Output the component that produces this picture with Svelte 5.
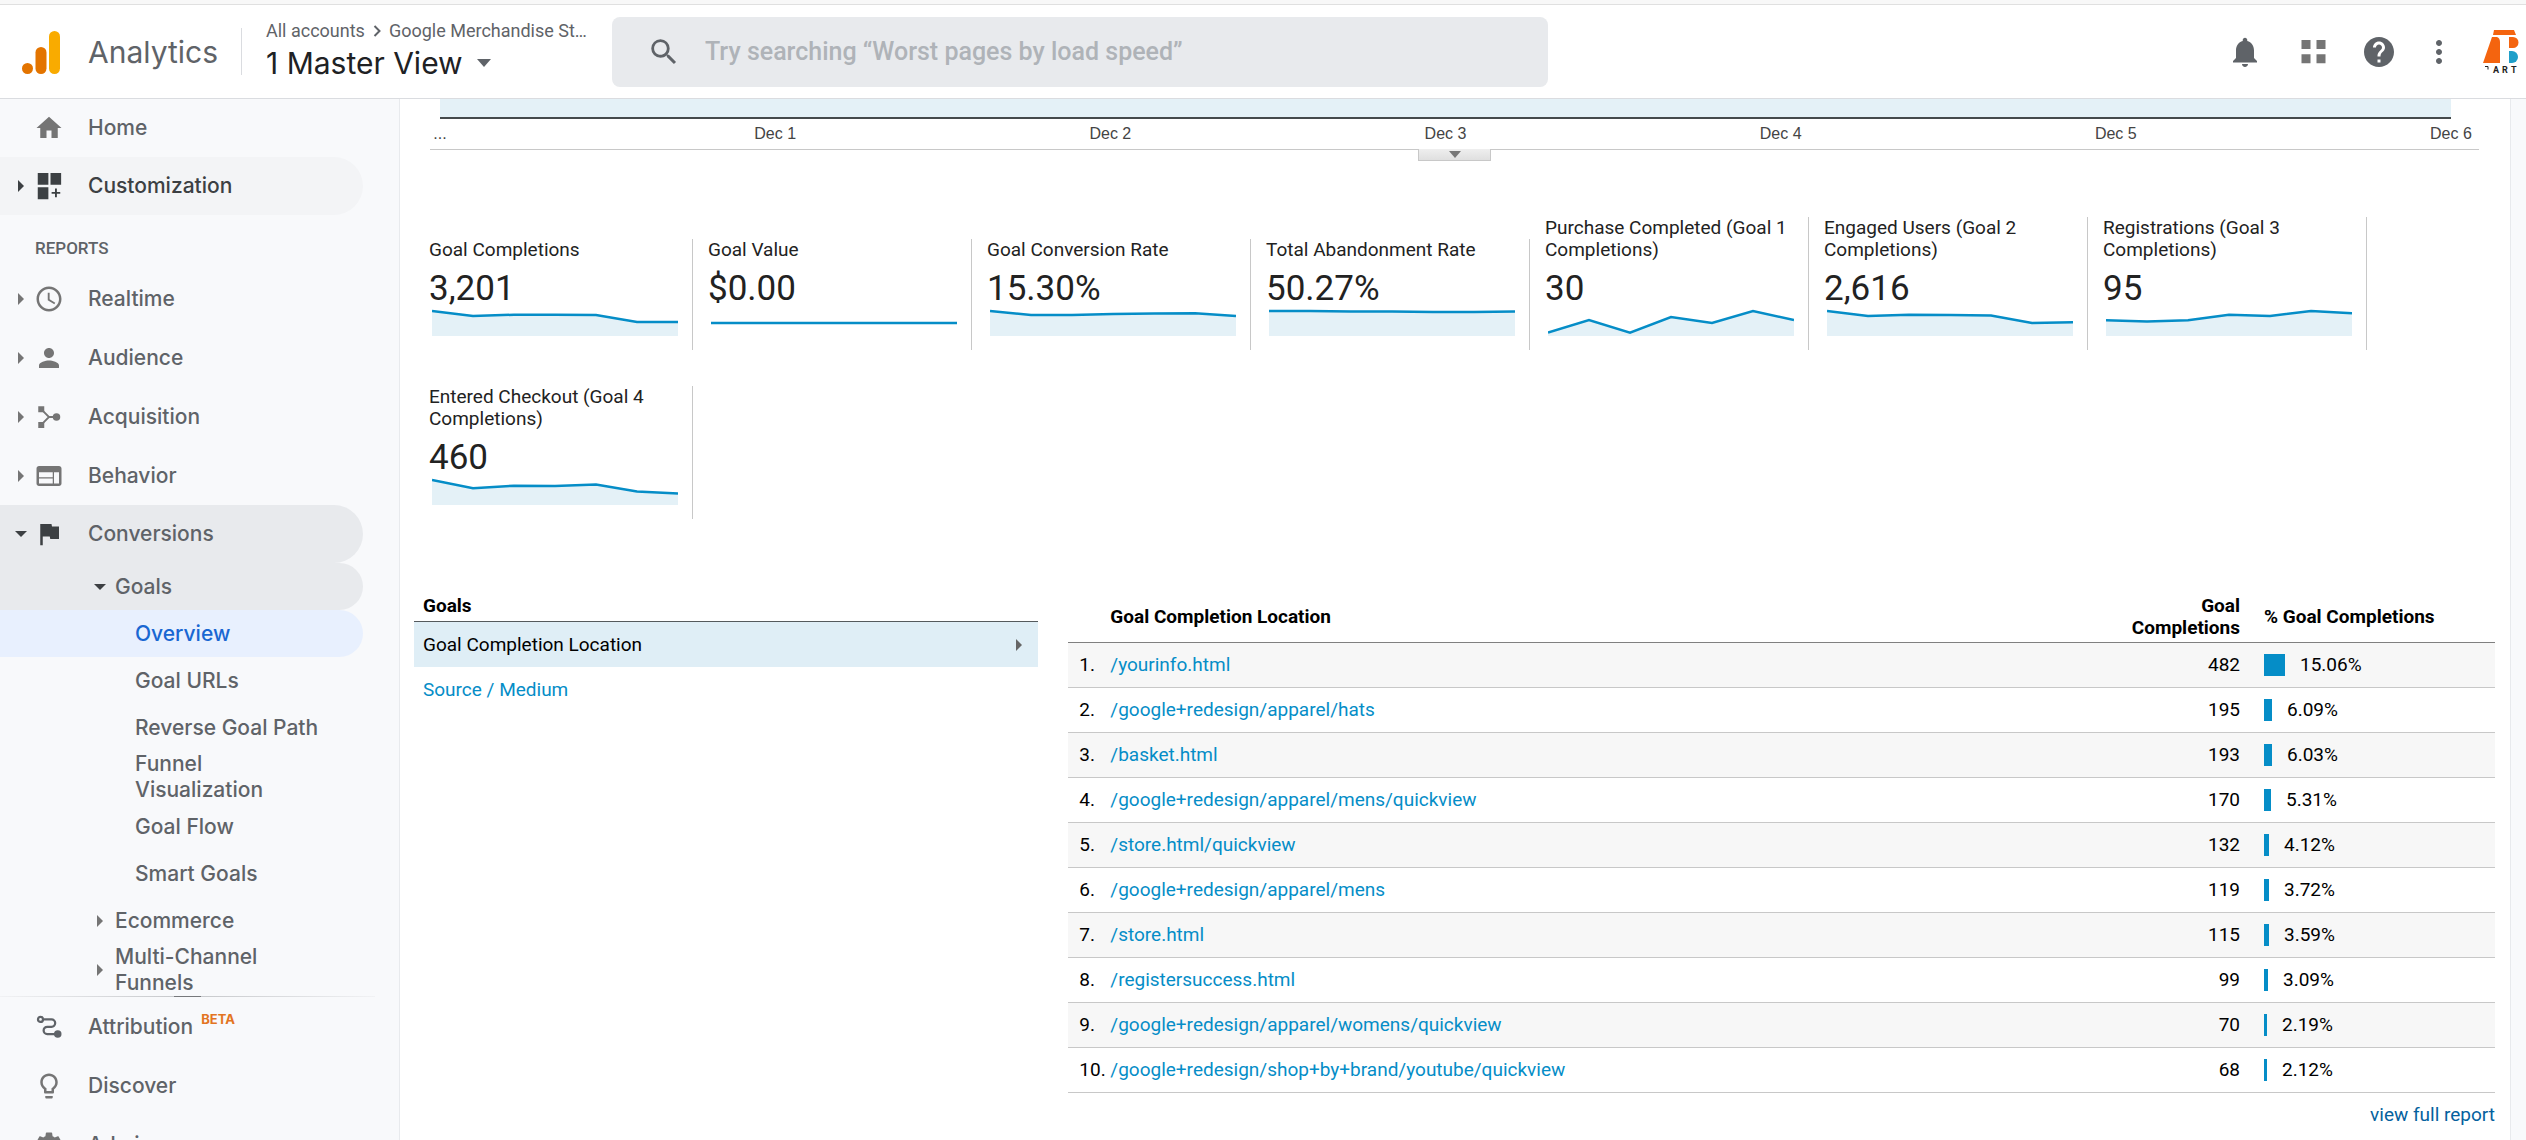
<script>
  const icons = {
    home: 'M10 20v-6h4v6h5v-8h3L12 3 2 12h3v8z',
    realtime: 'M11.99 2C6.47 2 2 6.48 2 12s4.47 10 9.99 10C17.52 22 22 17.52 22 12S17.52 2 11.99 2zM12 20c-4.42 0-8-3.58-8-8s3.58-8 8-8 8 3.58 8 8-3.58 8-8 8zM12.5 7H11v6l5.25 3.15.75-1.23-4.5-2.67z',
    audience: 'M12 12c2.21 0 4-1.79 4-4s-1.79-4-4-4-4 1.79-4 4 1.79 4 4 4zm0 2c-2.67 0-8 1.34-8 4v2h16v-2c0-2.66-5.33-4-8-4z',
    behavior: 'M20 4H4c-1.1 0-1.99.9-1.99 2L2 18c0 1.1.9 2 2 2h16c1.1 0 2-.9 2-2V6c0-1.1-.9-2-2-2zm-5 14H4v-4h11v4zm0-5H4V9h11v4zm5 5h-4V9h4v9z',
    conversions: 'M14.4 6L14 4H5v17h2v-7h5.6l.4 2h7V6z',
    discover: 'M9 21c0 .55.45 1 1 1h4c.55 0 1-.45 1-1v-1H9v1zm3-19C8.14 2 5 5.14 5 9c0 2.38 1.19 4.47 3 5.74V17c0 .55.45 1 1 1h6c.55 0 1-.45 1-1v-2.26c1.81-1.27 3-3.36 3-5.74 0-3.86-3.14-7-7-7zm2.85 11.1l-.85.6V16h-4v-2.3l-.85-.6C7.8 12.16 7 10.63 7 9c0-2.76 2.24-5 5-5s5 2.24 5 5c0 1.63-.8 3.16-2.15 4.1z',
    admin: 'M19.43 12.98c.04-.32.07-.64.07-.98s-.03-.66-.07-.98l2.11-1.65c.19-.15.24-.42.12-.64l-2-3.46c-.12-.22-.39-.3-.61-.22l-2.49 1c-.52-.4-1.08-.73-1.69-.98l-.38-2.65C14.46 2.18 14.25 2 14 2h-4c-.25 0-.46.18-.49.42l-.38 2.65c-.61.25-1.17.59-1.69.98l-2.49-1c-.23-.09-.49 0-.61.22l-2 3.46c-.13.22-.07.49.12.64l2.11 1.65c-.04.32-.07.65-.07.98s.03.66.07.98l-2.11 1.65c-.19.15-.24.42-.12.64l2 3.46c.12.22.39.3.61.22l2.49-1c.52.4 1.08.73 1.69.98l.38 2.65c.03.24.24.42.49.42h4c.25 0 .46-.18.49-.42l.38-2.65c.61-.25 1.17-.59 1.69-.98l2.49 1c.23.09.49 0 .61-.22l2-3.46c.12-.22.07-.49-.12-.64l-2.11-1.65zM12 15.5c-1.93 0-3.5-1.57-3.5-3.5s1.57-3.5 3.5-3.5 3.5 1.57 3.5 3.5-1.57 3.5-3.5 3.5z'
  };

  const sections = [
    { label: 'Realtime', icon: 'realtime' },
    { label: 'Audience', icon: 'audience' },
    { label: 'Acquisition', icon: 'acquisition' },
    { label: 'Behavior', icon: 'behavior' },
    { label: 'Conversions', icon: 'conversions', open: true }
  ];
  const goalPages = ['Overview', 'Goal URLs', 'Reverse Goal Path', 'Funnel Visualization', 'Goal Flow', 'Smart Goals'];
  const footerLinks = [
    { label: 'Attribution', icon: 'attribution', beta: true },
    { label: 'Discover', icon: 'discover' },
    { label: 'Admin', icon: 'admin' }
  ];

  const days = ['...', 'Dec 1', 'Dec 2', 'Dec 3', 'Dec 4', 'Dec 5', 'Dec 6'];

  // Each trend holds seven daily heights, measured down from the top of the sparkline.
  const metrics = [
    { label: 'Goal Completions', value: '3,201', trend: [3, 8, 6.7, 6.7, 7, 14, 14] },
    { label: 'Goal Value', value: '$0.00', trend: [15, 15, 15, 15, 15, 15, 15], flat: true },
    { label: 'Goal Conversion Rate', value: '15.30%', trend: [3, 7, 7, 6, 5.5, 5.3, 8] },
    { label: 'Total Abandonment Rate', value: '50.27%', trend: [3, 3, 3.4, 3.4, 4, 4, 3.4] },
    { label: 'Purchase Completed (Goal 1 Completions)', value: '30', trend: [24.6, 12, 24.6, 9, 15, 3, 12] },
    { label: 'Engaged Users (Goal 2 Completions)', value: '2,616', trend: [3, 8, 6.7, 7, 7.6, 15, 14.3] },
    { label: 'Registrations (Goal 3 Completions)', value: '95', trend: [12.3, 13.6, 12.3, 6.7, 8, 3, 5.3] },
    { label: 'Entered Checkout (Goal 4 Completions)', value: '460', trend: [3, 11.3, 8.7, 9, 7.4, 14.6, 16.4] }
  ];

  const rows = [
    ['/yourinfo.html', 482, 15.06],
    ['/google+redesign/apparel/hats', 195, 6.09],
    ['/basket.html', 193, 6.03],
    ['/google+redesign/apparel/mens/quickview', 170, 5.31],
    ['/store.html/quickview', 132, 4.12],
    ['/google+redesign/apparel/mens', 119, 3.72],
    ['/store.html', 115, 3.59],
    ['/registersuccess.html', 99, 3.09],
    ['/google+redesign/apparel/womens/quickview', 70, 2.19],
    ['/google+redesign/shop+by+brand/youtube/quickview', 68, 2.12]
  ];

  const linePoints = (trend) => trend.map((y, i) => `${i * 41},${y}`).join(' ');
  const barWidth = (pct) => Math.floor(pct * 1.42);
</script>

{#snippet caret(open)}
  <svg class="caret" class:open viewBox="0 0 12 12" aria-hidden="true"><path d="M3 0l6 6-6 6z" /></svg>
{/snippet}

{#snippet navIcon(name)}
  <svg class="nav-icon" viewBox="0 0 24 24" aria-hidden="true">
    {#if name === 'acquisition'}
      <path d="M3.4 3.4h4.8v4.8H3.4zM3.4 16h4.8v4.8H3.4z" />
      <circle cx="18" cy="12" r="3" />
      <path class="stroke" d="M6.5 6.5L12 12l-5.5 5.5M12 12h5" />
    {:else if name === 'attribution'}
      <circle class="stroke" cx="5.2" cy="5.9" r="2" />
      <path class="stroke" d="M7.4 5.9H14a2.95 2.95 0 0 1 0 5.9h-3.4a2.9 2.9 0 0 0 0 5.8H18" />
      <circle cx="19" cy="17.6" r="3" />
    {:else if name === 'custom'}
      <path d="M3 1.5h8.5V11H3zM13.2 1.5h8.5V11h-8.5zM3 13h8.5v9.500H3zM16.8 14h1.5v2.7H21v1.5h-2.7v2.7h-1.5v-2.7h-2.7v-1.5h2.7z" />
    {:else}
      <path d={icons[name]} />
    {/if}
  </svg>
{/snippet}

<div class="app">
  <header>
    <a class="brand" href="#home">
      <svg class="logo" viewBox="0 0 38 44" aria-hidden="true">
        <rect x="27" y="1" width="11" height="43" rx="5.5" fill="#f9ab00" />
        <rect x="13.5" y="17" width="11" height="27" rx="5.5" fill="#e37400" />
        <circle cx="5.5" cy="38.5" r="5.5" fill="#e37400" />
      </svg>
      <span>Analytics</span>
    </a>
    <button class="account">
      <span class="crumbs">
        All accounts
        <svg class="chevron" viewBox="0 0 8 12" aria-hidden="true"><path d="M1.5 1l5 5-5 5" /></svg>
        Google Merchandise St…
      </span>
      <span class="view">1 Master View <svg class="down" viewBox="0 0 14 8" aria-hidden="true"><path d="M0 0h14L7 8z" /></svg></span>
    </button>
    <label class="search">
      <svg viewBox="0 0 24 24" aria-hidden="true"><path d="M15.5 14h-.79l-.28-.27A6.471 6.471 0 0 0 16 9.5 6.5 6.5 0 1 0 9.5 16c1.61 0 3.09-.59 4.23-1.57l.27.28v.79l5 4.99L20.49 19l-4.99-5zm-6 0C7.01 14 5 11.99 5 9.5S7.01 5 9.5 5 14 7.01 14 9.5 11.99 14 9.5 14z" /></svg>
      <input type="search" aria-label="Search" placeholder="Try searching “Worst pages by load speed”" />
    </label>
    <div class="actions">
      <button aria-label="Notifications">
        <svg viewBox="0 0 24 24"><path d="M12 22c1.1 0 2-.9 2-2h-4c0 1.1.89 2 2 2zm6-6v-5c0-3.07-1.64-5.64-4.5-6.32V4c0-.83-.67-1.5-1.5-1.5s-1.5.67-1.5 1.5v.68C7.63 5.36 6 7.92 6 11v5l-2 2v1h16v-1l-2-2z" /></svg>
      </button>
      <button aria-label="Apps">
        <svg class="grid" viewBox="0 0 24 24"><path d="M5 4h6v6H5zM15 4h6v6h-6zM5 13.5h6v6H5zM15 13.5h6v6h-6z" /></svg>
      </button>
      <button aria-label="Help">
        <svg viewBox="0 0 24 24"><path d="M12 2C6.48 2 2 6.48 2 12s4.48 10 10 10 10-4.48 10-10S17.52 2 12 2zm1 17h-2v-2h2v2zm2.07-7.75l-.9.92C13.45 12.9 13 13.5 13 15h-2v-.5c0-1.1.45-2.1 1.17-2.83l1.24-1.26c.37-.36.59-.86.59-1.41 0-1.1-.9-2-2-2s-2 .9-2 2H8c0-2.21 1.79-4 4-4s4 1.79 4 4c0 .88-.36 1.68-.93 2.25z" /></svg>
      </button>
      <button class="narrow" aria-label="More">
        <svg viewBox="0 0 24 24"><path d="M12 8c1.1 0 2-.9 2-2s-.9-2-2-2-2 .9-2 2 .9 2 2 2zm0 2c-1.1 0-2 .9-2 2s.9 2 2 2 2-.9 2-2-.9-2-2-2zm0 6c-1.1 0-2 .9-2 2s.9 2 2 2 2-.9 2-2-.9-2-2-2z" /></svg>
      </button>
      <button class="avatar" aria-label="Account">
        <svg viewBox="0 0 36 44">
          <path d="M11 0h20l2 5H10z" fill="#f4640f" />
          <path d="M9 7h5q3 1 3 5v21H0z" fill="#f4640f" />
          <path d="M26 7h4a5.5 5.5 0 0 1 0 11h-4z" fill="#f4640f" />
          <path d="M26 21h3a6 6 0 0 1 0 12h-3z" fill="#1f9fc9" />
          <path d="M2 36.5h3v3" class="letter-edge" />
          <text x="10" y="43">A</text>
          <text x="19" y="43">R</text>
          <text x="28" y="43">T</text>
        </svg>
      </button>
    </div>
  </header>

  <div class="body">
    <nav>
      <a class="item short" href="#home"><span class="gutter"></span>{@render navIcon('home')}<span>Home</span></a>
      <a class="item short hover" href="#customization"><span class="gutter">{@render caret(false)}</span>{@render navIcon('custom')}<span>Customization</span></a>
      <h2>REPORTS</h2>
      {#each sections as s}
        <a class="item" class:active={s.open} class:short={s.open} href="#{s.icon}">
          <span class="gutter">{@render caret(s.open)}</span>{@render navIcon(s.icon)}<span>{s.label}</span>
        </a>
      {/each}
      <a class="group active" href="#goals">{@render caret(true)}<span>Goals</span></a>
      {#each goalPages as page, i}
        <a class="leaf" class:selected={i === 0} href="#goals-{i}"><span>{page}</span></a>
      {/each}
      <a class="group" href="#ecommerce">{@render caret(false)}<span>Ecommerce</span></a>
      <a class="group" href="#multi-channel">{@render caret(false)}<span>Multi-Channel Funnels</span></a>
      <div class="divider"><span></span></div>
      {#each footerLinks as f}
        <a class="item" class:dark={f.beta} href="#{f.icon}">
          <span class="gutter"></span>{@render navIcon(f.icon)}<span>{f.label}{#if f.beta}<sup>BETA</sup>{/if}</span>
        </a>
      {/each}
    </nav>

    <main>
      <section class="timeline">
        <div class="area"></div>
        <div class="days">
          {#each days as d}<span class="day">{d}</span>{/each}
        </div>
        <button class="handle" aria-label="Toggle chart"><svg viewBox="0 0 12 7"><path d="M0 0h12L6 7z" /></svg></button>
      </section>

      <section class="metrics">
        {#each metrics as m}
          <article>
            <h3>{m.label}</h3>
            <strong>{m.value}</strong>
            <svg viewBox="0 0 246 30" aria-hidden="true">
              {#if !m.flat}<polygon points="0,28 {linePoints(m.trend)} 246,28" />{/if}
              <polyline points={linePoints(m.trend)} />
            </svg>
          </article>
        {/each}
      </section>

      <section class="report">
        <div class="dimensions">
          <h3>Goals</h3>
          <a class="current" href="#location">Goal Completion Location <svg viewBox="0 0 6 12" aria-hidden="true"><path d="M0 0l6 6-6 6z" /></svg></a>
          <a href="#source">Source / Medium</a>
        </div>
        <div class="locations">
          <table>
            <thead>
              <tr>
                <th class="index"></th>
                <th class="path">Goal Completion Location</th>
                <th class="count">Goal Completions</th>
                <th class="share">% Goal Completions</th>
              </tr>
            </thead>
            <tbody>
              {#each rows as [path, count, pct], i}
                <tr>
                  <td class="index">{i + 1}.</td>
                  <td class="path"><a href="#row-{i}">{path}</a></td>
                  <td class="count">{count}</td>
                  <td class="share"><div><span class="bar" style:width="{barWidth(pct)}px"></span>{pct.toFixed(2)}%</div></td>
                </tr>
              {/each}
            </tbody>
          </table>
          <a class="full" href="#full">view full report</a>
        </div>
      </section>
    </main>
  </div>
</div>

<style>
  :global(body) {
    font-family: Roboto, 'Liberation Sans', sans-serif;
    font-size: 19px;
    line-height: 22px;
    color: #000;
  }
  .app {
    display: flex;
    flex-direction: column;
    height: 100vh;
    overflow: hidden;
    box-sizing: border-box;
    border-top: 4px solid #f8f8f8;
    background: #f8f9fb;
  }
  a { text-decoration: none; color: #058dc7; }
  button { border: 0; padding: 0; background: none; font: inherit; cursor: pointer; }
  h2, h3 { margin: 0; }

  header {
    display: flex;
    align-items: center;
    flex: none;
    height: 93px;
    padding: 0 7px 0 22px;
    border-top: 1px solid #e0e0e0;
    border-bottom: 1px solid #dadce0;
    background: #fff;
    color: #5f6368;
  }
  .brand {
    display: flex;
    align-items: center;
    gap: 28px;
    width: 219px;
    height: 47px;
    border-right: 1px solid #dadce0;
    font: 30px/44px Inter, sans-serif;
    color: #5f6368;
  }
  .logo { width: 38px; height: 44px; }
  .account {
    display: flex;
    flex-direction: column;
    width: 346px;
    padding: 0 0 3px 24px;
    box-sizing: border-box;
    text-align: left;
    color: #5f6368;
    white-space: nowrap;
  }
  .crumbs { display: flex; align-items: center; gap: 8px; font-size: 18px; line-height: 26px; }
  .chevron { width: 8px; height: 12px; fill: none; stroke: #5f6368; stroke-width: 2; }
  .view { display: flex; align-items: center; gap: 14px; font: 30px/38px Inter, sans-serif; color: #202124; }
  .down { width: 14px; height: 8px; fill: #5f6368; }
  .search {
    display: flex;
    align-items: center;
    gap: 24px;
    flex: 0 1 936px;
    height: 70px;
    padding: 0 35px;
    margin-left: 24px;
    box-sizing: border-box;
    border-radius: 8px;
    background: #e8eaed;
  }
  .search svg { flex: none; width: 34px; height: 34px; fill: #5f6368; }
  .search input { flex: 1; min-width: 0; border: 0; padding: 0; outline: 0; background: none; font: 500 25px/32px Roboto, sans-serif; color: #5f6368; }
  .search input::placeholder { color: #afb3b8; opacity: 1; }
  .actions { display: flex; align-items: center; gap: 31px; margin-left: auto; }
  .actions button { display: flex; justify-content: center; width: 36px; }
  .actions svg { flex: none; width: 36px; height: 36px; fill: #5f6368; }
  .actions .grid { fill: #757575; }
  .actions .narrow { width: 22px; }
  .actions .avatar { width: 38px; justify-content: flex-end; }
  .actions .avatar svg { width: 36px; height: 44px; }
  .avatar text { font: 700 9px Roboto, sans-serif; fill: #222; }
  .letter-edge { fill: none; stroke: #222; }

  .body { display: flex; flex: 1; min-height: 0; padding-right: 15px; }
  nav {
    flex: none;
    width: 399px;
    border-right: 1px solid #e8eaed;
    overflow: hidden;
    font: 500 21px/26px Inter, sans-serif;
  }
  nav a { display: flex; align-items: center; width: 363px; box-sizing: border-box; color: #5f6368; fill: #757575; }
  .item { height: 59px; border-radius: 0 30px 30px 0; }
  .short { height: 58px; }
  .gutter { display: flex; justify-content: center; width: 20px; padding: 0 3px 0 11px; }
  .nav-icon { width: 30px; height: 30px; margin-right: 24px; }
  .stroke { fill: none; stroke: #757575; stroke-width: 1.5; }
  .dark { fill: #5f6368; }
  .dark .stroke { stroke: #5f6368; stroke-width: 1.8; }
  .caret { flex: none; width: 12px; height: 12px; }
  .caret.open { transform: rotate(90deg); }
  .hover { background: #f3f4f6; }
  nav .hover { color: #3c4043; fill: #3c4043; }
  .active { background: #e8eaed; }
  nav .active { fill: #3c4043; }
  nav h2 { height: 54px; padding: 20px 0 0 35px; box-sizing: border-box; font: 500 17px/26px Roboto, sans-serif; color: #5f6368; }
  .group { min-height: 47px; padding-left: 94px; gap: 9px; border-radius: 0 24px 24px 0; }
  .group span, .leaf span { max-width: 184px; }
  .leaf { min-height: 47px; padding-left: 135px; border-radius: 0 24px 24px 0; }
  nav .selected { background: #e8f0fe; color: #1967d2; }
  .divider {
    display: flex;
    justify-content: center;
    width: 375px;
    height: 1px;
    background: linear-gradient(90deg, #f1f2f4, #c4c6c9 50%, #f1f2f4);
  }
  .divider span { width: 27px; background: #77797c; }
  sup { margin-left: 8px; font: 700 13px/13px Inter, sans-serif; color: #e37422; vertical-align: 10px; }

  main { flex: 1; min-width: 0; padding: 0 15px 0 14px; border-right: 1px solid #e8eaed; background: #fff; overflow: hidden; }
  .timeline { display: flex; flex-direction: column; align-items: center; padding: 0 16px; }
  .area { align-self: stretch; height: 18px; margin: 0 28px 0 10px; border-bottom: 2px solid #444a4c; background: #e4f1f7; }
  .days { display: flex; align-self: stretch; justify-content: space-between; height: 30px; padding: 0 28px 0 10px; border-bottom: 1px solid #c8c8c8; font: 16px/30px 'Liberation Sans', sans-serif; color: #444; }
  .day { display: flex; justify-content: center; width: 0; white-space: nowrap; }
  .handle {
    display: flex;
    align-items: center;
    justify-content: center;
    width: 73px;
    height: 12px;
    margin-top: -1px;
    box-sizing: border-box;
    border: 1px solid #c8c8c8;
    border-top: 0;
    background: linear-gradient(#efefef, #dfdfdf);
  }
  .handle svg { width: 12px; height: 7px; fill: #777; }

  .metrics { display: flex; flex-wrap: wrap; align-items: flex-end; row-gap: 36px; padding-top: 56px; }
  article { width: 279px; padding: 0 9px 12px 15px; border-right: 1px solid #c8c8c8; box-sizing: border-box; color: #222; }
  h3 { font-size: 19px; font-weight: 400; }
  strong { display: block; margin-top: 8px; font-size: 35px; line-height: 39px; font-weight: 400; }
  article svg { display: block; width: 246px; height: 30px; margin-left: 3px; }
  polygon { fill: #e4f1f7; }
  polyline { fill: none; stroke: #058dc7; stroke-width: 2.5; }

  .report { display: flex; align-items: flex-start; gap: 30px; padding-top: 76px; }
  .dimensions { flex: 0 0 30%; }
  .dimensions h3 { padding: 0 9px 4px; border-bottom: 1px solid #555a5d; font-weight: 700; }
  .dimensions a { display: flex; align-items: center; justify-content: space-between; height: 45px; padding: 0 16px 0 9px; }
  .dimensions .current { background: #dfeef6; color: #000; }
  .dimensions svg { width: 6px; height: 12px; fill: #666; }
  .locations { flex: 1; min-width: 0; text-align: right; }
  table { width: 100%; border-collapse: collapse; text-align: left; }
  th { padding: 0 0 3px; height: 43px; border-bottom: 1px solid #808080; font-weight: 700; }
  td { height: 44px; padding: 0; border-bottom: 1px solid #c8c8c8; }
  tbody tr:nth-child(odd) { background: #f7f7f7; }
  .index { width: 31px; padding-left: 11px; white-space: nowrap; }
  .count { width: 120px; text-align: right; }
  .share { width: 231px; padding-left: 24px; white-space: nowrap; }
  .share div { display: flex; align-items: center; gap: 15px; }
  .bar { height: 22px; background: #058dc7; }
  .full { display: inline-block; margin-top: 11px; color: #05619e; }
</style>
